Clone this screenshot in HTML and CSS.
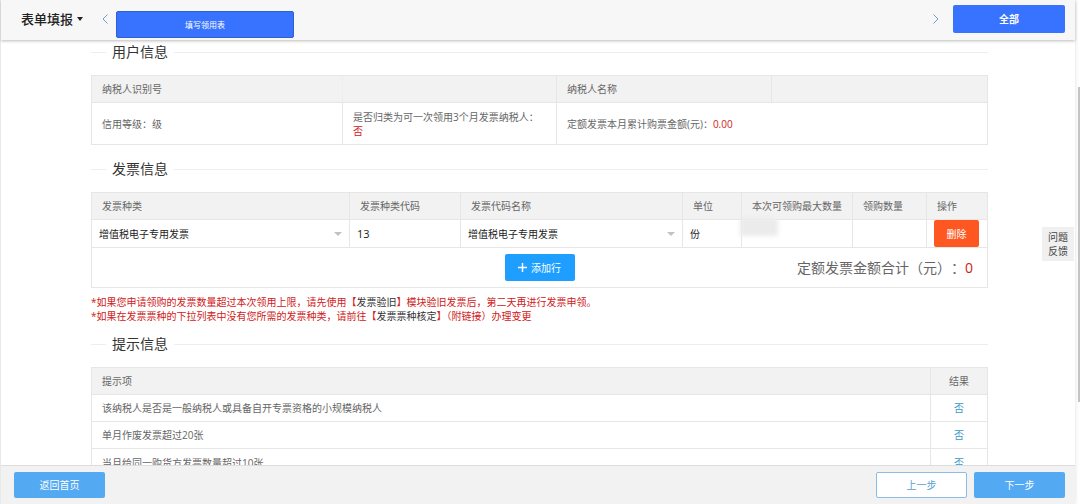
FILE: index.html
```
<!DOCTYPE html>
<html lang="zh-CN">
<head>
  <meta charset="UTF-8" />
  <meta name="viewport" content="width=device-width, initial-scale=1.0"/>
  <title>表单填报</title>
  <link rel="stylesheet" href="styles.css">
</head>
<body>
  <div class="page">
    <header class="topbar">
      <button class="menu" type="button">表单填报<span class="caret"></span></button>
      <button class="arrow" type="button" aria-label="向左">
        <svg width="6" height="10" viewBox="0 0 6 10"><path d="M5.5 0.5L1 5l4.500 4.500" /></svg>
      </button>
      <nav class="tabs">
        <button class="tab" type="button">填写领用表</button>
      </nav>
      <button class="arrow arrow-right" type="button" aria-label="向右">
        <svg width="6" height="10" viewBox="0 0 6 10"><path d="M0.500 0.500L5 5l-4.500 4.500" /></svg>
      </button>
      <button class="all" type="button">全部</button>
    </header>

    <main class="content">
      <h2 class="title">用户信息</h2>
      <table class="user-table">
        <colgroup>
          <col><col class="w-214"><col class="w-215"><col class="w-215">
        </colgroup>
        <thead>
          <tr>
            <th class="faint">纳税人识别号</th>
            <th></th>
            <th>纳税人名称</th>
            <th></th>
          </tr>
        </thead>
        <tbody>
          <tr>
            <td>信用等级<span class="colon">：</span>级</td>
            <td>是否归类为可一次领用3个月发票纳税人<span class="colon">：</span><br><span class="red">否</span></td>
            <td colspan="2">定额发票本月累计购票金额(元)<span class="colon">：</span><span class="red">0.00</span></td>
          </tr>
        </tbody>
      </table>

      <h2 class="title">发票信息</h2>
      <table class="invoice-table">
        <colgroup>
          <col><col class="w-111"><col class="w-222"><col class="w-59"><col class="w-111"><col class="w-74"><col class="w-60">
        </colgroup>
        <thead>
          <tr>
            <th>发票种类</th>
            <th>发票种类代码</th>
            <th>发票代码名称</th>
            <th>单位</th>
            <th>本次可领购最大数量</th>
            <th>领购数量</th>
            <th>操作</th>
          </tr>
        </thead>
        <tbody>
          <tr>
            <td>
              <div class="select">
                <select aria-label="发票种类"><option>增值税电子专用发票</option></select>
              </div>
            </td>
            <td class="code">13</td>
            <td>
              <div class="select">
                <select aria-label="发票代码名称"><option>增值税电子专用发票</option></select>
              </div>
            </td>
            <td>份</td>
            <td class="max"><span class="smudge"></span></td>
            <td><input class="count" type="text" aria-label="领购数量"></td>
            <td><button class="delete" type="button">删除</button></td>
          </tr>
        </tbody>
        <tfoot>
          <tr>
            <td colspan="7">
              <div class="sum-row">
                <button class="add" type="button">
                  <svg width="9" height="9" viewBox="0 0 9 9"><path d="M4.500 0v9M0 4.500h9" /></svg>添加行
                </button>
                <p class="sum">定额发票金额合计（元）<span class="colon">：</span><span class="red">0</span></p>
              </div>
            </td>
          </tr>
        </tfoot>
      </table>
      <div class="notes">
        <p>*如果您申请领购的发票数量超过本次领用上限，请先使用【<a href="#">发票验旧</a>】模块验旧发票后，第二天再进行发票申领。</p>
        <p>*如果在发票票种的下拉列表中没有您所需的发票种类，请前往【<a href="#">发票票种核定</a>】（附链接）办理变更</p>
      </div>

      <h2 class="title">提示信息</h2>
      <table class="tips-table">
        <colgroup>
          <col><col class="w-56">
        </colgroup>
        <thead>
          <tr><th>提示项</th><th>结果</th></tr>
        </thead>
        <tbody>
          <tr><td>该纳税人是否是一般纳税人或具备自开专票资格的小规模纳税人</td><td>否</td></tr>
          <tr><td>单月作废发票超过20张</td><td>否</td></tr>
          <tr><td>当月给同一购货方发票数量超过10张</td><td>否</td></tr>
        </tbody>
      </table>
    </main>

    <footer class="bottombar">
      <button class="step" type="button">返回首页</button>
      <button class="step step-prev" type="button">上一步</button>
      <button class="step" type="button">下一步</button>
    </footer>
  </div>

  <button class="feedback" type="button">问题<br>反馈</button>
  <div class="scroll-thumb"></div>
</body>
</html>
```
FILE: styles.css
```
* {
  box-sizing: border-box;
}
body {
  margin: 0;
  background: #fff;
  color: #666;
  font-family: "Open Sans", "Noto Sans CJK SC", sans-serif;
  font-size: 10px;
  line-height: 14px;
}
button, input, select {
  margin: 0;
  padding: 0;
  border: 0;
  background: none;
  color: inherit;
  font: inherit;
}
h2, p {
  margin: 0;
}
a {
  color: #333;
  text-decoration: none;
}
.red {
  color: #d02020;
}
/* colon centred in its square */
.colon {
  font-family: "Noto Sans CJK TC", sans-serif;
  line-height: 1;
}

.page {
  display: flex;
  flex-direction: column;
  height: 100vh;
  margin-right: 5px;
  border-left: 1px solid #e8e8e8;
  box-shadow: 0 0 4px #ddd;
}

/* top bar */
.topbar {
  display: flex;
  flex: none;
  align-items: center;
  height: 40px;
  padding: 0 10px 2px 20px;
  background: #f7f7f7;
  box-shadow: 0 1px 3px #bbb;
  z-index: 1;
}
.menu {
  display: flex;
  align-items: center;
  gap: 4px;
  color: #222;
  font-size: 13px;
  font-weight: 500;
}
.caret {
  border: 3px solid transparent;
  border-top: 4px solid #222;
  border-bottom: 0;
}
.arrow {
  display: flex;
  margin: 0 8px 0 19px;
}
.arrow-right {
  margin: 0 14px 0 0;
}
.arrow path {
  fill: none;
  stroke: #7f93cc;
}
.tabs {
  flex: 1;
  align-self: flex-end;
}
.tab {
  display: block;
  width: 178px;
  height: 27px;
  border: 1px solid #3060d0;
  border-radius: 2px;
  background: #3873ff;
  color: #fff;
  font-size: 8px;
}
.all {
  width: 112px;
  height: 28px;
  border-radius: 2px;
  background: #3873ff;
  color: #fff;
  font-weight: bold;
}

/* form */
.content {
  flex: 1;
  min-height: 0;
  overflow: hidden;
  padding: 2px 87px 0 90px;
}
.title {
  display: flex;
  align-items: center;
  gap: 6px;
  margin-bottom: 13px;
  color: #333;
  font-size: 14px;
  font-weight: normal;
  line-height: 20px;
}
.title::before,
.title::after {
  content: "";
  width: 15px;
  height: 1px;
  background: #eee;
}
.title::after {
  flex: 1;
}
table {
  width: 100%;
  margin-bottom: 14px;
  border: 1px solid #e6e6e6;
  border-spacing: 0;
  table-layout: fixed;
}
th, td {
  padding: 0 10px;
  border-right: 1px solid #e6e6e6;
  border-bottom: 1px solid #e6e6e6;
  font-weight: normal;
  text-align: left;
  white-space: nowrap;
}
th:last-child, td:last-child {
  border-right: 0;
}
tr:last-child > td {
  border-bottom: 0;
}
th {
  height: 27px;
  background: #f2f2f2;
}
.w-56 { width: 56px; }
.w-59 { width: 59px; }
.w-60 { width: 60px; }
.w-74 { width: 74px; }
.w-111 { width: 111px; }
.w-214 { width: 214px; }
.w-215 { width: 215px; }
.w-222 { width: 222px; }

.user-table td {
  height: 41px;
}
.user-table .faint {
  border-right-color: #eee;
}

.invoice-table {
  margin-bottom: 7px;
}
.invoice-table tbody td {
  height: 28px;
  padding: 0 7px;
  border-bottom: 1px solid #e6e6e6;
  color: #222;
}
.invoice-table .code {
  font-size: 11px;
}
.select {
  position: relative;
}
.select select {
  display: block;
  width: 100%;
  height: 27px;
  appearance: none;
}
.select::after {
  content: "";
  position: absolute;
  top: 12px;
  right: 0;
  border: 4px solid transparent;
  border-top-color: #c2c2c2;
  border-bottom: 0;
  pointer-events: none;
}
.max {
  position: relative;
}
.smudge {
  position: absolute;
  top: -2px;
  left: -2px;
  width: 38px;
  height: 18px;
  background: #ebebeb;
  filter: blur(2px);
}
.count {
  display: block;
  width: 100%;
  height: 27px;
}
.delete {
  display: block;
  width: 45px;
  height: 27px;
  border-radius: 2px;
  background: #ff5722;
  color: #fff;
}
.sum-row {
  display: grid;
  grid-template-columns: 1fr auto 1fr;
  align-items: center;
  height: 39px;
}
.add {
  display: flex;
  grid-column: 2;
  align-items: center;
  justify-content: center;
  gap: 4px;
  width: 70px;
  height: 27px;
  border-radius: 2px;
  background: #1e9fff;
  color: #fff;
}
.add path {
  stroke: #fff;
  stroke-width: 1.5;
}
.sum {
  padding-right: 4px;
  font-size: 14px;
  text-align: right;
  text-spacing-trim: space-all;
}
.notes {
  margin-bottom: 11px;
  color: #d02020;
}

.tips-table {
  margin-bottom: 0;
}
.tips-table td {
  height: 27px;
}
.tips-table th:last-child,
.tips-table td:last-child {
  text-align: center;
}
.tips-table td:last-child {
  color: #3a9bc8;
}

/* bottom bar */
.bottombar {
  display: flex;
  flex: none;
  align-items: center;
  gap: 7px;
  height: 39px;
  padding: 0 10px 0 13px;
  border-top: 1px solid #ddd;
  background: #f2f2f2;
}
.step {
  width: 91px;
  height: 26px;
  border-radius: 2px;
  background: #54a9f3;
  color: #fff;
}
.step-prev {
  margin-left: auto;
  border: 1px solid #8fbbe8;
  background: #fff;
  color: #54a0d0;
}

.feedback {
  position: fixed;
  top: 227px;
  right: 6px;
  width: 32px;
  height: 34px;
  background: #f0f0f0;
  color: #444;
}
.scroll-thumb {
  position: fixed;
  top: 87px;
  right: 0;
  width: 2px;
  height: 315px;
  background: #c4c4c4;
}
```
